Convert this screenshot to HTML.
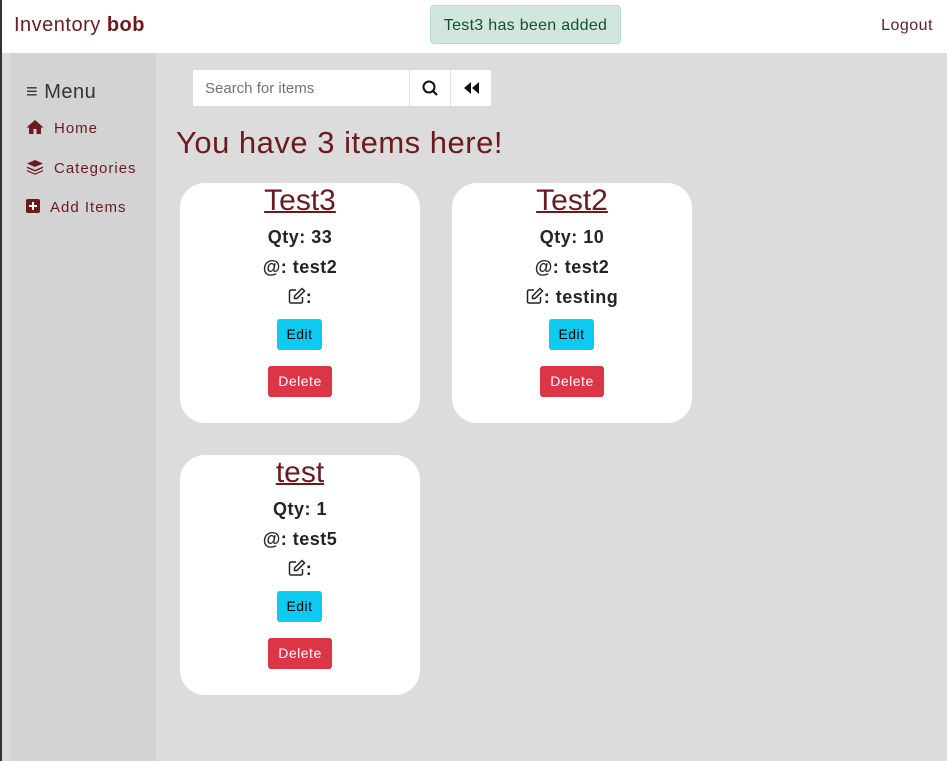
<!DOCTYPE html>
<html><head><style>
*{box-sizing:border-box;margin:0;padding:0}
body{width:947px;height:761px;overflow:hidden;background:#dcdcdc;font-family:"Liberation Sans",sans-serif;position:relative}
.top{position:absolute;left:0;top:0;width:947px;height:53px;background:#fff;border-left:2px solid #333}
.brand{position:absolute;left:12px;top:14px;font-size:20px;color:#6b1a1f;letter-spacing:.5px}
.alert{position:absolute;left:428px;top:5px;width:191px;height:39px;background:#d1e7dd;border:1px solid #badbcc;border-radius:4px;color:#0f5132;font-size:16px;line-height:39px;text-align:center;letter-spacing:.3px}
.logout{position:absolute;right:14px;top:17px;font-size:16px;color:#6b1a1f;letter-spacing:.5px}
.lb{position:absolute;left:0;top:53px;width:2px;height:708px;background:#333}
.side{position:absolute;left:10px;top:53px;width:146px;height:708px;background:#d3d3d3}
.side .m{position:absolute;left:16px;top:28px;font-size:20px;color:#333;letter-spacing:.5px}
.side .i{position:absolute;left:16px;font-size:15px;color:#6b1a1f;letter-spacing:1px}
.search{position:absolute;left:193px;top:70px;width:298px;height:36px;background:#fff}
.search span{position:absolute;left:12px;top:10px;font-size:15px;color:#6c757d}
.sb{position:absolute;top:0;width:41px;height:36px;border-left:1px solid #dee2e6}
h1{position:absolute;left:176px;top:125px;font-size:31px;font-weight:normal;color:#6b1a1f;letter-spacing:.5px}
.card{position:absolute;width:240px;height:240px;background:#fff;border-radius:25px;text-align:center;color:#212529}
.card .t{position:absolute;left:0;width:100%;top:1px;font-size:30px;color:#6b1a1f;text-decoration:underline;text-decoration-thickness:2px}
.card .l{position:absolute;left:0;width:100%;font-size:18px;font-weight:bold;letter-spacing:.5px}
.card .l svg{vertical-align:-2px}
.btn{position:absolute;height:31px;border-radius:3px;font-size:14px;line-height:31px;letter-spacing:.5px}
.e{left:97px;width:45px;top:136px;background:#0dcaf0;color:#000}
.d{left:88px;width:64px;top:183px;background:#dc3545;color:#fff}
</style></head><body>
<div class="top"><div class="brand">Inventory <b>bob</b></div>
<div class="alert">Test3 has been added</div><div class="logout">Logout</div></div>
<div class="lb"></div>
<div class="side">
<div class="m">&#8801; Menu</div>
<div class="i" style="top:66px"><svg width="18" height="16" viewBox="0 0 18 16" style="vertical-align:-2px;margin-right:10px"><path d="M9 1L0.5 8.5h2.5v6.5h4.5v-5h3v5h4.5V8.5h2.5z" fill="#6b1a1f"/></svg>Home</div>
<div class="i" style="top:106px"><svg width="18" height="16" viewBox="0 0 18 16" style="vertical-align:-2px;margin-right:10px"><path d="M9 1l8 3.5-8 3.5-8-3.5z M1 7.5l8 3.5 8-3.5v1.5l-8 3.5-8-3.5z M1 11l8 3.5 8-3.5v1.2l-8 3.5-8-3.5z" fill="#6b1a1f"/></svg>Categories</div>
<div class="i" style="top:146px"><svg width="14" height="14" viewBox="0 0 14 14" style="vertical-align:-1px;margin-right:10px"><rect width="14" height="14" rx="2" fill="#6b1a1f"/><path d="M7 3v8M3 7h8" stroke="#fff" stroke-width="2"/></svg>Add Items</div>
</div>
<div class="search"><span>Search for items</span>
<div class="sb" style="left:216px"><svg width="41" height="36"><circle cx="19" cy="17" r="5.5" fill="none" stroke="#111" stroke-width="2"/><path d="M23 21l4 4" stroke="#111" stroke-width="2.2"/></svg></div>
<div class="sb" style="left:257px"><svg width="41" height="36"><path d="M20 12v12l-7-6zM28 12v12l-7-6z" fill="#111"/></svg></div></div>
<h1>You have 3 items here!</h1>

<div class="card" style="left:180px;top:183px"><div class="t">Test3</div>
<div class="l" style="top:44px">Qty: 33</div><div class="l" style="top:74px">@: test2</div><div class="l" style="top:104px"><svg width="18" height="18" viewBox="0 0 18 18"><path d="M8 3H3a1.5 1.5 0 0 0-1.5 1.5v10A1.5 1.5 0 0 0 3 16h10a1.5 1.5 0 0 0 1.5-1.5V10" fill="none" stroke="#212529" stroke-width="1.5"/><path d="M14 1.5l2.5 2.5-7.5 7.5H6.5V9z" fill="none" stroke="#212529" stroke-width="1.5"/></svg>:</div>
<div class="btn e">Edit</div><div class="btn d">Delete</div></div>
<div class="card" style="left:452px;top:183px"><div class="t">Test2</div>
<div class="l" style="top:44px">Qty: 10</div><div class="l" style="top:74px">@: test2</div><div class="l" style="top:104px"><svg width="18" height="18" viewBox="0 0 18 18"><path d="M8 3H3a1.5 1.5 0 0 0-1.5 1.5v10A1.5 1.5 0 0 0 3 16h10a1.5 1.5 0 0 0 1.5-1.5V10" fill="none" stroke="#212529" stroke-width="1.5"/><path d="M14 1.5l2.5 2.5-7.5 7.5H6.5V9z" fill="none" stroke="#212529" stroke-width="1.5"/></svg>: testing</div>
<div class="btn e">Edit</div><div class="btn d">Delete</div></div>
<div class="card" style="left:180px;top:455px"><div class="t">test</div>
<div class="l" style="top:44px">Qty: 1</div><div class="l" style="top:74px">@: test5</div><div class="l" style="top:104px"><svg width="18" height="18" viewBox="0 0 18 18"><path d="M8 3H3a1.5 1.5 0 0 0-1.5 1.5v10A1.5 1.5 0 0 0 3 16h10a1.5 1.5 0 0 0 1.5-1.5V10" fill="none" stroke="#212529" stroke-width="1.5"/><path d="M14 1.5l2.5 2.5-7.5 7.5H6.5V9z" fill="none" stroke="#212529" stroke-width="1.5"/></svg>:</div>
<div class="btn e">Edit</div><div class="btn d">Delete</div></div>
</body></html>
